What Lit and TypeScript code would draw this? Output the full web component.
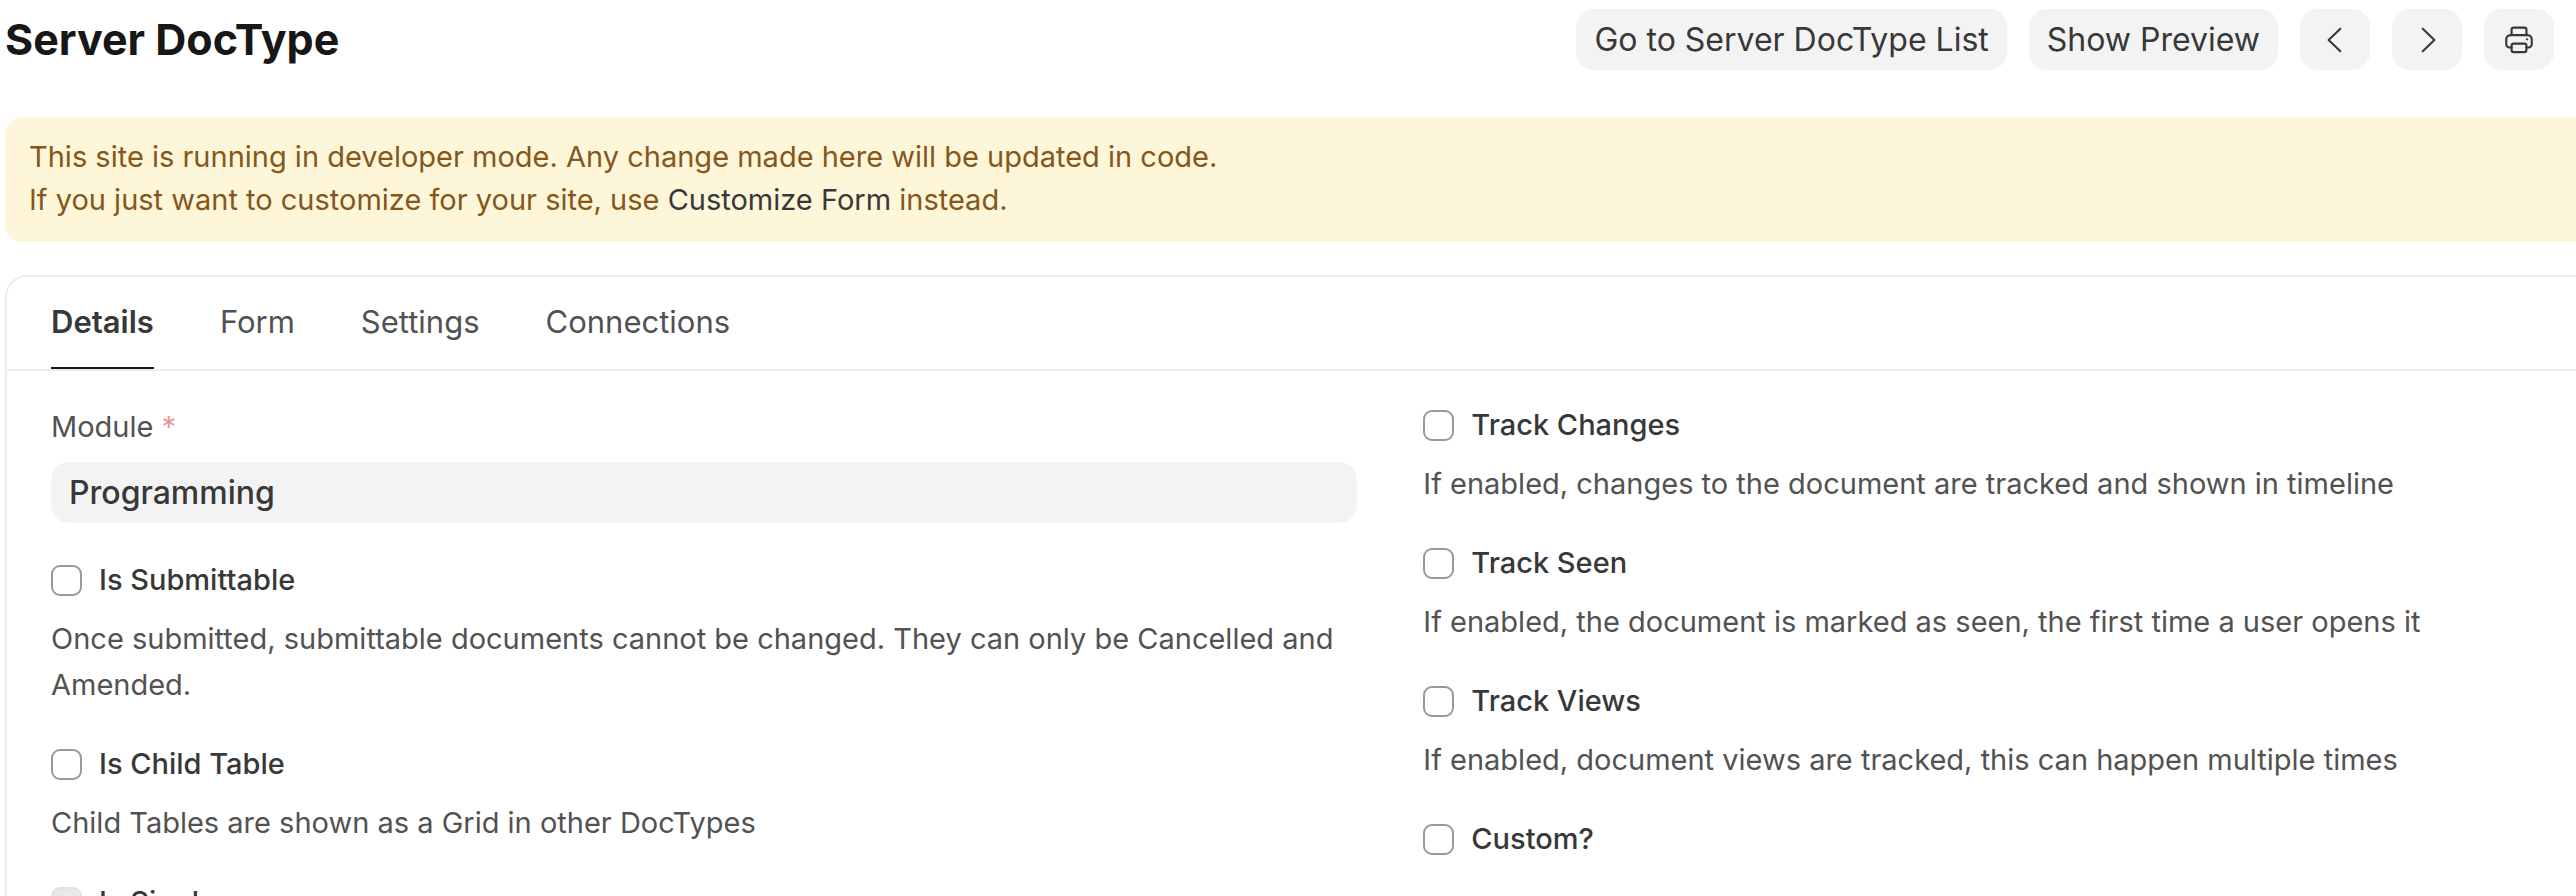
import { LitElement, html, css, svg, nothing } from "lit";
import { customElement, state } from "lit/decorators.js";

interface CheckField {
  id: string;
  label: string;
  description?: string;
  disabled?: boolean;
}

const TABS = ["Details", "Form", "Settings", "Connections"];

const TYPE_FIELDS: CheckField[] = [
  {
    id: "is-submittable",
    label: "Is Submittable",
    description:
      "Once submitted, submittable documents cannot be changed. They can only be Cancelled and Amended.",
  },
  {
    id: "is-child-table",
    label: "Is Child Table",
    description: "Child Tables are shown as a Grid in other DocTypes",
  },
  { id: "is-single", label: "Is Single", disabled: true },
];

const TRACK_FIELDS: CheckField[] = [
  {
    id: "track-changes",
    label: "Track Changes",
    description: "If enabled, changes to the document are tracked and shown in timeline",
  },
  {
    id: "track-seen",
    label: "Track Seen",
    description: "If enabled, the document is marked as seen, the first time a user opens it",
  },
  {
    id: "track-views",
    label: "Track Views",
    description: "If enabled, document views are tracked, this can happen multiple times",
  },
  { id: "custom", label: "Custom?" },
];

const ICONS = {
  previous: svg`<path d="M10.500 2.700 5 8l5.500 5.300" />`,
  next: svg`<path d="M6 13.300 11.500 8 6 2.700" />`,
  print: svg`
    <path d="M4.500 5.700V3.200a1 1 0 0 1 1-1h5a1 1 0 0 1 1 1v2.500" />
    <path d="M4.500 11.500H3.500a1.500 1.500 0 0 1-1.500-1.500V7.700a2 2 0 0 1 2-2h8a2 2 0 0 1 2 2V10a1.500 1.500 0 0 1-1.500 1.500h-1" />
    <rect x="4.500" y="9.700" width="7" height="4" rx="1" />
    <path d="M11.800 7.700h.01" />`,
};

@customElement("app-root")
export class AppRoot extends LitElement {
  static styles = css`
    :host {
      display: block;
      height: 100vh;
      overflow: hidden;
      box-sizing: border-box;
      padding-left: 5px;
      background: #fff;
      color: #383838;
      font-family: Inter, "Noto Sans", sans-serif;
      font-size: 29px;
      line-height: 46px;
    }
    * {
      box-sizing: border-box;
    }
    .head {
      display: flex;
      align-items: center;
      justify-content: space-between;
      padding: 9px 22px 0 0;
    }
    .title {
      margin: 0;
      font-size: 43px;
      font-weight: 700;
      line-height: 61px;
      color: #171717;
    }
    .actions {
      display: flex;
      gap: 22px;
    }
    .btn {
      display: flex;
      align-items: center;
      justify-content: center;
      height: 61px;
      padding: 0 18px;
      border: 0;
      border-radius: 18px;
      background: #f3f3f3;
      color: #383838;
      font: inherit;
      font-size: 32px;
    }
    .icon {
      width: 34px;
      height: 34px;
      fill: none;
      stroke: currentColor;
      stroke-linecap: round;
      stroke-linejoin: round;
    }
    .notice {
      margin: 47px 0 33px;
      padding: 18px 24px 21px;
      border-radius: 18px 0 0 18px;
      background: #fdf6d8;
      color: #86571b;
      line-height: 43px;
    }
    .link {
      color: #383838;
      text-decoration: none;
    }
    .card {
      border: 2px solid #ededed;
      border-width: 2px 0 0 2px;
      border-radius: 22px 0 0 0;
    }
    .tabs {
      display: flex;
      gap: 66px;
      padding: 0 44px;
      border-bottom: 2px solid #ededed;
    }
    .tab {
      height: 92px;
      padding: 0;
      border: 0;
      border-bottom: 2px solid transparent;
      background: none;
      color: #525252;
      font: inherit;
      font-size: 31px;
    }
    .tab[aria-selected="true"] {
      border-color: #171717;
      color: #383838;
      font-weight: 600;
    }
    .body {
      display: grid;
      grid-template-columns: minmax(0, 17fr) minmax(0, 15fr);
      gap: 66px;
      padding: 31px 0 0 44px;
    }
    .column {
      display: flex;
      flex-direction: column;
    }
    .field {
      display: flex;
      flex-direction: column;
      gap: 12px;
      padding-top: 2px;
      margin-bottom: 34px;
    }
    .label {
      color: #525252;
    }
    .required {
      color: #e79a9a;
    }
    .input {
      width: 100%;
      height: 61px;
      padding: 0 18px;
      border: 0;
      border-radius: 18px;
      background: #f3f3f3;
      color: #383838;
      font: inherit;
      font-size: 32px;
      font-weight: 500;
    }
    .check {
      margin-bottom: 33px;
    }
    .check-label {
      display: flex;
      align-items: center;
      gap: 17px;
      font-weight: 500;
    }
    .box {
      appearance: none;
      width: 31px;
      height: 31px;
      margin: 0;
      border: 2px solid #999;
      border-radius: 9px;
      background: #fff;
    }
    .box:disabled {
      border-color: #e2e2e2;
      background: #e8e8e8;
    }
    .hint {
      margin: 13px 0 0;
      color: #525252;
    }
  `;

  @state() private activeTab = TABS[0];

  private renderIcon(name: keyof typeof ICONS) {
    return html`<svg class="icon" viewBox="0 0 16 16" aria-hidden="true">${ICONS[name]}</svg>`;
  }

  private renderCheck(field: CheckField) {
    return html`
      <div class="check">
        <label class="check-label" for=${field.id}>
          <input class="box" type="checkbox" id=${field.id} ?disabled=${field.disabled ?? false} />
          <span>${field.label}</span>
        </label>
        ${field.description ? html`<p class="hint">${field.description}</p>` : nothing}
      </div>
    `;
  }

  render() {
    return html`
      <header class="head">
        <h1 class="title">Server DocType</h1>
        <div class="actions">
          <button class="btn" type="button">Go to Server DocType List</button>
          <button class="btn" type="button">Show Preview</button>
          <button class="btn" type="button" aria-label="Previous">${this.renderIcon("previous")}</button>
          <button class="btn" type="button" aria-label="Next">${this.renderIcon("next")}</button>
          <button class="btn" type="button" aria-label="Print">${this.renderIcon("print")}</button>
        </div>
      </header>
      <div class="notice">
        This site is running in developer mode. Any change made here will be updated in code.<br />
        If you just want to customize for your site, use
        <a class="link" href="#customize-form">Customize Form</a> instead.
      </div>
      <main class="card">
        <div class="tabs" role="tablist">
          ${TABS.map(
            (tab) => html`<button
              class="tab"
              type="button"
              role="tab"
              aria-selected=${tab === this.activeTab}
              @click=${() => (this.activeTab = tab)}
            >${tab}</button>`,
          )}
        </div>
        <div class="body">
          <div class="column">
            <div class="field">
              <label class="label" for="module">Module <span class="required">*</span></label>
              <input class="input" id="module" type="text" required .value=${"Programming"} />
            </div>
            ${TYPE_FIELDS.map((field) => this.renderCheck(field))}
          </div>
          <div class="column">${TRACK_FIELDS.map((field) => this.renderCheck(field))}</div>
        </div>
      </main>
    `;
  }
}
